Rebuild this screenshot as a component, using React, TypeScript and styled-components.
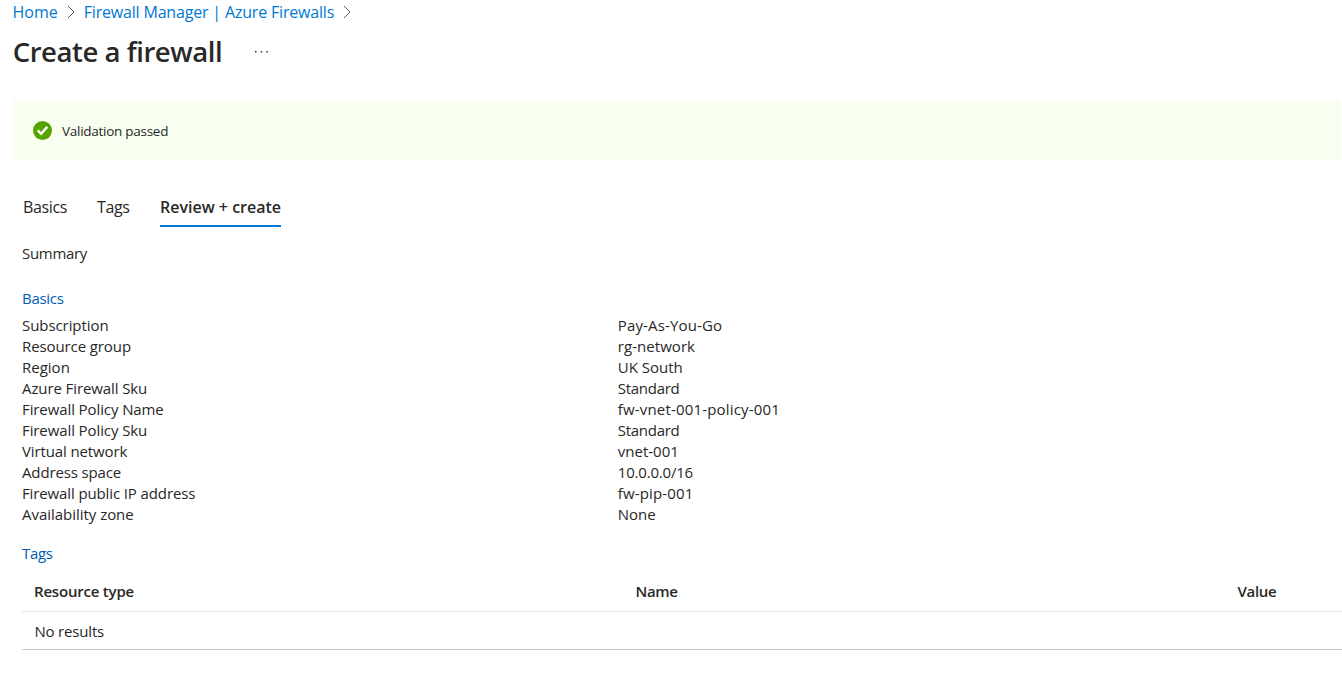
import React from "react";
import styled, { createGlobalStyle } from "styled-components";

const GlobalStyle = createGlobalStyle`
  * { box-sizing: border-box; }
  body {
    margin: 0;
    background: #fff;
    color: #292827;
    font-family: "Segoe UI", "Open Sans", "Noto Sans", sans-serif;
    font-size: 15px;
    overflow: hidden;
  }
`;

const Page = styled.main`
  height: 687px;
  overflow: hidden;
  white-space: nowrap;
`;

const Label = styled.span<{ $track?: number }>`
  letter-spacing: ${(p) => p.$track ?? 0}px;
`;

const Breadcrumb = styled.nav`
  display: flex;
  align-items: center;
  height: 24px;
  padding-left: 12.5px;
  font-size: 16px;
  line-height: 24px;
`;

const Crumb = styled.a`
  color: #0078d4;
  text-decoration: none;
`;

const Chevron = styled.svg`
  width: 8px;
  height: 14px;
  margin: 0 9px;
  fill: none;
  stroke: #605e5c;
`;

const TitleRow = styled.header`
  display: flex;
  align-items: center;
  height: 56px;
  padding-left: 12.7px;
`;

const Title = styled.h1`
  margin: 0;
  width: 242.3px;
  font-size: 27.5px;
  font-weight: 600;
  line-height: 56px;
`;

const More = styled.svg`
  width: 14px;
  height: 4px;
  fill: #323130;
`;

const Banner = styled.section`
  display: flex;
  align-items: center;
  height: 60px;
  margin: 20px 1px 0 13px;
  padding: 1px 0 0 20px;
  gap: 10px;
  background: #f8fff0;
  font-size: 13.5px;
`;

const Check = styled.svg`
  width: 19px;
  height: 19px;
`;

const Tabs = styled.nav`
  display: flex;
  height: 40px;
  margin: 27px 0 0 23px;
  gap: 30px;
  font-size: 16px;
`;

const Tab = styled.a<{ $width: number; $active?: boolean }>`
  width: ${(p) => p.$width}px;
  line-height: 40px;
  height: 40px;
  font-weight: ${(p) => (p.$active ? 600 : 400)};
  border-bottom: 2px solid ${(p) => (p.$active ? "#0078d4" : "transparent")};
`;

const Content = styled.section`
  padding: 16px 0 0 22px;
`;

const Summary = styled.p`
  margin: 0;
  line-height: 21px;
`;

const SectionTitle = styled.h2<{ $top: number }>`
  margin: ${(p) => p.$top}px 0 0;
  font-size: 15px;
  font-weight: 400;
  line-height: 21px;
  color: #015cb5;
`;

const Properties = styled.dl`
  display: grid;
  grid-template-columns: 595.8px 1fr;
  grid-auto-rows: 21px;
  margin: 6px 0 0;
  line-height: 21px;
`;

const Term = styled.dt``;

const Value = styled.dd`
  margin: 0;
`;

const Table = styled.div`
  margin-top: 9px;
`;

const TableRow = styled.div<{ $head?: boolean }>`
  display: grid;
  grid-template-columns: 601.5px 602px 1fr;
  align-items: center;
  height: ${(p) => (p.$head ? 39 : 38)}px;
  padding: ${(p) => (p.$head ? "0 0 2px 12px" : "1px 0 0 12.4px")};
  font-weight: ${(p) => (p.$head ? 600 : 400)};
  border-bottom: 1px solid ${(p) => (p.$head ? "#e6e6e6" : "#c8c8c8")};
`;

const properties: [string, number, string, number][] = [
  ["Subscription", -0.07, "Pay-As-You-Go", 0.15],
  ["Resource group", -0.1, "rg-network", 0.05],
  ["Region", 0, "UK South", 0],
  ["Azure Firewall Sku", -0.1, "Standard", -0.28],
  ["Firewall Policy Name", -0.1, "fw-vnet-001-policy-001", 0.17],
  ["Firewall Policy Sku", -0.1, "Standard", -0.28],
  ["Virtual network", -0.12, "vnet-001", 0],
  ["Address space", -0.14, "10.0.0.0/16", -0.2],
  ["Firewall public IP address", -0.12, "fw-pip-001", 0.15],
  ["Availability zone", -0.03, "None", 0],
];

const Separator = () => (
  <Chevron viewBox="0 0 8 14">
    <path d="M1 1l6 6-6 6" />
  </Chevron>
);

export default function App() {
  return (
    <Page>
      <GlobalStyle />
      <Breadcrumb>
        <Crumb><Label>Home</Label></Crumb>
        <Separator />
        <Crumb><Label $track={-0.18}>Firewall Manager | Azure Firewalls</Label></Crumb>
        <Separator />
      </Breadcrumb>
      <TitleRow>
        <Title><Label $track={-0.45}>Create a firewall</Label></Title>
        <More viewBox="0 0 14 4">
          <rect x="0" y="1" width="1.5" height="1.5" />
          <rect x="5.7" y="1" width="1.5" height="1.5" />
          <rect x="11.4" y="1" width="1.5" height="1.5" />
        </More>
      </TitleRow>
      <Banner>
        <Check viewBox="0 0 19 19">
          <circle cx="9.5" cy="9.5" r="9.5" fill="#57a300" />
          <path d="M4.7 9.3l3.4 3.5 6.2-6.9" fill="none" stroke="#fff" strokeWidth="2.4" />
        </Check>
        <Label $track={-0.27}>Validation passed</Label>
      </Banner>
      <Tabs>
        <Tab $width={44}><Label $track={-0.35}>Basics</Label></Tab>
        <Tab $width={33}><Label $track={-0.35}>Tags</Label></Tab>
        <Tab $width={121} $active><Label>Review + create</Label></Tab>
      </Tabs>
      <Content>
        <Summary><Label $track={-0.3}>Summary</Label></Summary>
        <SectionTitle $top={24}><Label $track={-0.3}>Basics</Label></SectionTitle>
        <Properties>
          {properties.map(([term, termTrack, value, valueTrack]) => (
            <React.Fragment key={term}>
              <Term><Label $track={termTrack}>{term}</Label></Term>
              <Value><Label $track={valueTrack}>{value}</Label></Value>
            </React.Fragment>
          ))}
        </Properties>
        <SectionTitle $top={18}><Label $track={-0.3}>Tags</Label></SectionTitle>
        <Table>
          <TableRow $head>
            <Label $track={-0.2}>Resource type</Label>
            <Label $track={-0.3}>Name</Label>
            <Label $track={-0.3}>Value</Label>
          </TableRow>
          <TableRow>
            <Label $track={-0.17}>No results</Label>
          </TableRow>
        </Table>
      </Content>
    </Page>
  );
}
